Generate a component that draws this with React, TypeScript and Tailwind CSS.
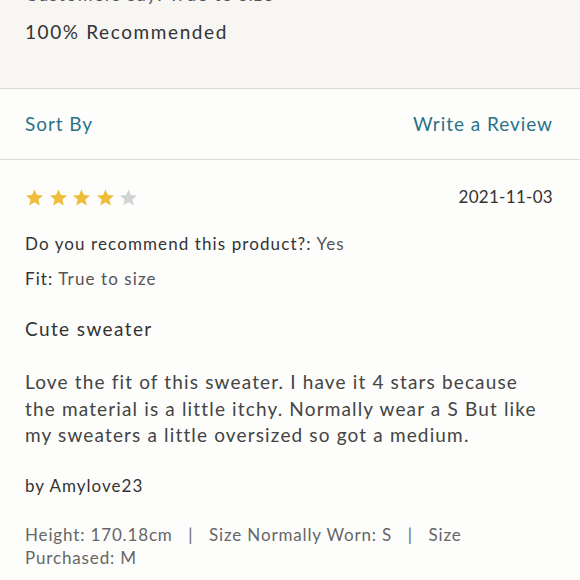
import React from "react";

function Star({ filled }: { filled: boolean }) {
  return (
    <svg width="19" height="19" viewBox="0 0 24 24" className={filled ? "text-[#efbd3a]" : "text-[#d3d3d3]"}>
      <path
        fill="currentColor"
        d="M12 1.8l3.05 7.1 7.7.62-5.86 5.03 1.8 7.52L12 18.03l-6.69 4.04 1.8-7.52L1.25 9.52l7.7-.62z"
      />
    </svg>
  );
}

export default function App() {
  const font = { fontFamily: "Lato, 'Noto Sans', sans-serif" };
  const sep = " \u00a0\u00a0|\u00a0\u00a0 ";
  return (
    <div className="w-[580px] h-[580px] overflow-hidden bg-[#fdfdfb] text-[#333]" style={font}>
      <div className="bg-[#f7f6f3] border-b border-[#d9d9d9] h-[89px] pl-[25px] overflow-hidden">
        <div className="-mt-[18px] text-[18px] leading-[24px] tracking-[1.3px] text-[#555]">Customers say: True to size</div>
        <div className="mt-[14px] text-[19px] leading-[24px] tracking-[1.6px] text-[#333]">100% Recommended</div>
      </div>
      <div className="h-[71px] border-b border-[#dcdcdc] flex items-center justify-between pl-[25px] pr-[27px] text-[19px] tracking-[0.05em] text-[#2a7389]">
        <span>Sort By</span>
        <span>Write a Review</span>
      </div>
      <div className="pl-[25px] pr-[27px]">
        <div className="flex items-center justify-between mt-[27px] h-[20px]">
          <div className="flex gap-[4.5px]">
            <Star filled />
            <Star filled />
            <Star filled />
            <Star filled />
            <Star filled={false} />
          </div>
          <span className="text-[17px] tracking-[0.3px] text-[#333]">2021-11-03</span>
        </div>
        <div className="mt-[26px] text-[17px] leading-[22px] tracking-[1.1px]">
          <span className="text-[#333]">Do you recommend this product?:</span>
          <span className="text-[#555]"> Yes</span>
        </div>
        <div className="mt-[13px] text-[17px] leading-[22px] tracking-[1.1px]">
          <span className="text-[#333]">Fit:</span>
          <span className="text-[#555]"> True to size</span>
        </div>
        <div className="mt-[27px] text-[19px] leading-[24px] tracking-[1.4px] text-[#333]">Cute sweater</div>
        <div className="mt-[28px] text-[19px] leading-[26.5px] tracking-[1.15px] text-[#444]">
          Love the fit of this sweater. I have it 4 stars because the material is a little itchy. Normally wear a S But like my sweaters a little oversized so got a medium.
        </div>
        <div className="mt-[25px] text-[17px] leading-[24px] tracking-[0.06em] text-[#333]">by Amylove23</div>
        <div className="mt-[25px] text-[17px] leading-[23px] tracking-[0.05em] text-[#666]">
          {"Height: 170.18cm" + sep + "Size Normally Worn: S" + sep + "Size Purchased: M"}
        </div>
      </div>
    </div>
  );
}
